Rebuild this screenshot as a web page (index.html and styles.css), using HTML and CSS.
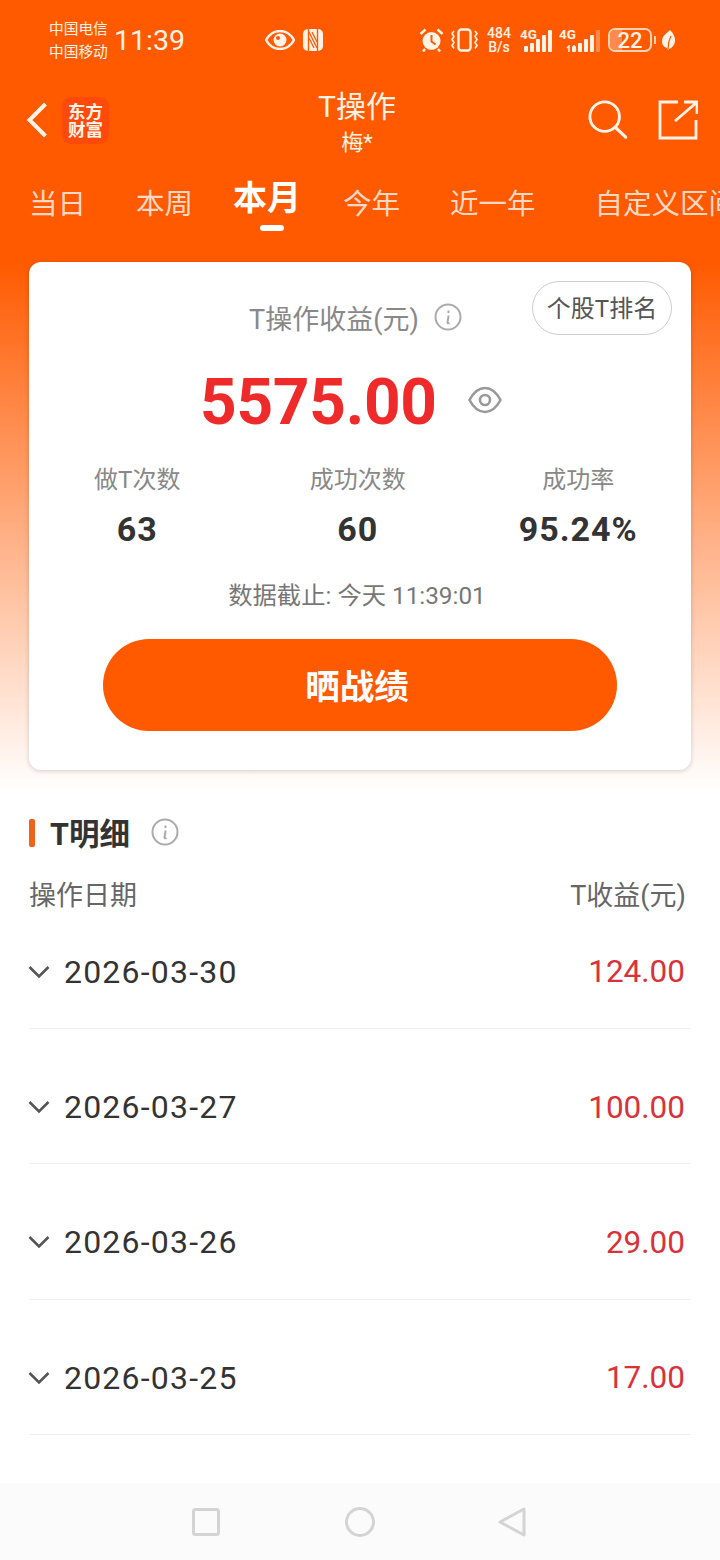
FILE: index.html
```html
<!DOCTYPE html>
<html>
  <head>
    <meta charset="utf-8" />
    <title>T操作</title>
    <link rel="stylesheet" href="styles.css">
  </head>
  <body>
    <div class="hero">
      <!-- status bar -->
      <div class="status">
        <div class="carrier">
          <span>中国电信</span>
          <span>中国移动</span>
        </div>
        <div class="time">11:39</div>
        <svg class="st-eye" width="30" height="20" viewBox="0 0 30 20">
          <path d="M1 10C5 3 10 1 15 1s10 2 14 9c-4 7-9 9-14 9S5 17 1 10z" fill="none" stroke="#fff3e8" stroke-width="2.4"/>
          <circle cx="15" cy="10" r="6.5" fill="#fff3e8"/>
          <circle cx="13" cy="8" r="2" fill="#ff5a00"/>
        </svg>
        <svg class="st-nfc" width="20" height="22" viewBox="0 0 20 22">
          <rect x="0" y="0" width="20" height="22" rx="5" fill="#fff3e8"/>
          <path d="M5.500 0v22M14.500 0v22" stroke="#ff5a00" stroke-width="1.400"/>
          <path d="M6 3l8 16M6 9l5 10M9 3l5 10" fill="none" stroke="#ff5a00" stroke-width="1.300"/>
        </svg>
        <div class="st-right">
          <svg width="25" height="24" viewBox="0 0 25 24">
            <circle cx="12.500" cy="13" r="9" fill="#fff3e8"/>
            <path d="M12.500 7v6.500l4 3" fill="none" stroke="#ff5a00" stroke-width="2"/>
            <path d="M1.500 6l5-4.500M23.500 6l-5-4.500M6 21l-2 2.500M19 21l2 2.500" stroke="#fff3e8" stroke-width="2.400" fill="none"/>
          </svg>
          <svg width="27" height="24" viewBox="0 0 27 24">
            <rect x="7.500" y="1.500" width="12" height="21" rx="3" fill="none" stroke="#fff3e8" stroke-width="2.400"/>
            <path d="M3 3l-2 2.500 2 3-2 3 2 3-2 3 2 3M24 3l2 2.500-2 3 2 3-2 3 2 3-2 3" fill="none" stroke="#fff3e8" stroke-width="1.600"/>
          </svg>
          <div class="speed"><span>484</span><span>B/s</span></div>
          <div class="signal">
            <span class="net">4G</span>
            <div class="bars">
              <i class="b1"></i><i class="b2"></i><i class="b3"></i><i class="b4"></i><i class="b5"></i>
            </div>
          </div>
          <div class="signal sig2">
            <span class="net">4G</span>
            <svg class="arrows" width="11" height="7" viewBox="0 0 11 7">
              <path d="M3 7V1L1 3M8 0v6l2-2" fill="none" stroke="#fff3e8" stroke-width="1.500"/>
            </svg>
            <div class="bars">
              <i class="b1"></i><i class="b2"></i><i class="b3"></i><i class="b4"></i><i class="b5 dim"></i>
            </div>
          </div>
          <div class="battery"><i class="fill"></i><span>22</span></div>
          <i class="bat-tip"></i>
          <svg width="13" height="20" viewBox="0 0 13 20">
            <path d="M8 0C11 3 13 6 13 10c0 5-3 8-6 9l-1 1-1-2C2 17 0 15 0 11 0 6 5 3 8 0z" fill="#fff3e8"/>
            <path d="M6 19C6 14 7 10 9 6" fill="none" stroke="#ff5a00" stroke-width="1.200"/>
          </svg>
        </div>
      </div>

      <!-- nav -->
      <div class="nav">
        <svg class="back" width="22" height="36" viewBox="0 0 22 36">
          <path d="M19.500 2L3.500 18l16 16" fill="none" stroke="#fff3e8" stroke-width="4"/>
        </svg>
        <div class="logo">东方财富</div>
        <div class="nav-title">
          <div class="title">T操作</div>
          <div class="sub">梅*</div>
        </div>
        <svg class="search" width="40" height="40" viewBox="0 0 42 42">
          <circle cx="17.500" cy="17.500" r="15.500" fill="none" stroke="#fff3e8" stroke-width="3"/>
          <path d="M29 29l10.500 10" fill="none" stroke="#fff3e8" stroke-width="3.400" stroke-linecap="round"/>
        </svg>
        <svg class="share" width="40" height="40" viewBox="0 0 40 40">
          <path d="M20 2H2v36h36V20" fill="none" stroke="#fff3e8" stroke-width="2.800"/>
          <path d="M17 21L38 3M26 2h13v12" fill="none" stroke="#fff3e8" stroke-width="2.800"/>
        </svg>
      </div>

      <!-- tabs -->
      <div class="tabs">
        <span>当日</span>
        <span>本周</span>
        <span class="active">本月</span>
        <span>今年</span>
        <span>近一年</span>
        <span class="last">自定义区间</span>
      </div>

      <div class="card">
        <div class="rank">个股T排名</div>
        <div class="card-title">
          <span>T操作收益(元)</span>
          <svg width="28" height="28" viewBox="0 0 28 28">
            <circle cx="14" cy="14" r="12.500" fill="none" stroke="#aaa" stroke-width="2"/>
            <path d="M14.500 7.500v2.500M14.500 12.500c0 3-1 5-1 7 0 1 1 1 2 .5" fill="none" stroke="#aaa" stroke-width="2"/>
          </svg>
        </div>
        <div class="amount-row">
          <span class="amount">5575.00</span>
          <svg class="amount-eye" width="34" height="34" viewBox="0 0 34 34">
            <path d="M1.500 17C6 8.500 11.500 5 17 5s11 3.500 15.500 12C28 25.500 22.500 29 17 29S6 25.500 1.500 17z" fill="none" stroke="#999" stroke-width="2.600"/>
            <circle cx="17" cy="17" r="5" fill="none" stroke="#999" stroke-width="2.600"/>
          </svg>
        </div>
        <div class="stats">
          <div class="stat"><div class="lab">做T次数</div><div class="val">63</div></div>
          <div class="stat"><div class="lab">成功次数</div><div class="val">60</div></div>
          <div class="stat"><div class="lab">成功率</div><div class="val">95.24%</div></div>
        </div>
        <div class="deadline">数据截止: 今天 11:39:01</div>
        <div class="btn">晒战绩</div>
      </div>
    </div>

    <div class="detail">
      <div class="sec-head">
        <i class="sec-bar"></i>
        <span class="sec-title">T明细</span>
        <svg width="28" height="28" viewBox="0 0 28 28">
          <circle cx="14" cy="14" r="12.500" fill="none" stroke="#aaa" stroke-width="2"/>
          <path d="M14.500 7.500v2.500M14.500 12.500c0 3-1 5-1 7 0 1 1 1 2 .5" fill="none" stroke="#aaa" stroke-width="2"/>
        </svg>
      </div>
      <div class="col-head">
        <span>操作日期</span>
        <span>T收益(元)</span>
      </div>
      <div class="row">
        <svg class="chev" width="22" height="14" viewBox="0 0 22 14"><path d="M1.500 2l9.500 9.500L20.500 2" fill="none" stroke="#555" stroke-width="2.600"/></svg>
        <span class="date">2026-03-30</span>
        <span class="money">124.00</span>
      </div>
      <div class="row">
        <svg class="chev" width="22" height="14" viewBox="0 0 22 14"><path d="M1.500 2l9.500 9.500L20.500 2" fill="none" stroke="#555" stroke-width="2.600"/></svg>
        <span class="date">2026-03-27</span>
        <span class="money">100.00</span>
      </div>
      <div class="row">
        <svg class="chev" width="22" height="14" viewBox="0 0 22 14"><path d="M1.500 2l9.500 9.500L20.500 2" fill="none" stroke="#555" stroke-width="2.600"/></svg>
        <span class="date">2026-03-26</span>
        <span class="money">29.00</span>
      </div>
      <div class="row">
        <svg class="chev" width="22" height="14" viewBox="0 0 22 14"><path d="M1.500 2l9.500 9.500L20.500 2" fill="none" stroke="#555" stroke-width="2.600"/></svg>
        <span class="date">2026-03-25</span>
        <span class="money">17.00</span>
      </div>
    </div>

    <div class="sysbar">
      <svg class="sq" width="28" height="28" viewBox="0 0 28 28"><rect x="1.500" y="1.500" width="25" height="25" rx="2" fill="none" stroke="#d4d4d4" stroke-width="3"/></svg>
      <svg width="30" height="30" viewBox="0 0 30 30"><circle cx="15" cy="15" r="13.500" fill="none" stroke="#d4d4d4" stroke-width="3"/></svg>
      <svg class="tri" width="28" height="30" viewBox="0 0 28 30"><path d="M26 2v26L2 15z" fill="none" stroke="#d4d4d4" stroke-width="3" stroke-linejoin="round"/></svg>
    </div>
  </body>
</html>
```

FILE: styles.css
```css
* {
  box-sizing: border-box;
}

html,
body {
  margin: 0;
  height: 1560px;
  overflow: hidden;
}

body {
  display: flex;
  flex-direction: column;
  background-color: #fff;
  font-family: Roboto, "Noto Sans CJK SC", sans-serif;
  width: 720px;
}

.hero {
  height: 790px;
  padding-top: 18px;
  background: linear-gradient(180deg, #ff5a00 0, #ff5a00 262px, #ffffff 790px);
}

/* status bar */
.status {
  display: flex;
  align-items: center;
  height: 44px;
  padding-left: 49px;
  color: #fff3e8;
}

.carrier {
  display: flex;
  flex-direction: column;
  padding-top: 2px;
  font-size: 14.700px;
  line-height: 23px;
  width: 65px;
}

.time {
  font-size: 28.500px;
  width: 151px;
}

.st-eye {
  margin-right: 8px;
}

.st-right {
  display: flex;
  align-items: center;
  margin-left: 96px;
}

.st-right svg:nth-child(2) {
  margin-left: 7px;
}

.speed {
  display: flex;
  flex-direction: column;
  align-items: center;
  width: 26px;
  margin-left: 8px;
  font-size: 14px;
  font-weight: 500;
  line-height: 14px;
}

.signal {
  position: relative;
  width: 32px;
  height: 24px;
  margin-left: 8px;
}

.sig2 {
  width: 41px;
  margin-left: 7px;
}

.net {
  position: absolute;
  left: 0;
  top: -1px;
  font-size: 13.500px;
  font-weight: 700;
  line-height: 14px;
}

.arrows {
  position: absolute;
  left: 0;
  bottom: 0;
}

.bars {
  position: absolute;
  right: 0;
  bottom: 0;
  display: flex;
  align-items: flex-end;
  gap: 2px;
}

.bars i {
  display: block;
  width: 4px;
  background-color: #fff3e8;
  border-radius: 1px;
}

.bars .b1 { height: 6px; }
.bars .b2 { height: 9px; }
.bars .b3 { height: 13px; }
.bars .b4 { height: 17px; }
.bars .b5 { height: 22px; }
.bars .dim { background-color: #ff8a4d; }

.battery {
  position: relative;
  display: flex;
  align-items: center;
  justify-content: center;
  width: 44px;
  height: 24px;
  margin-left: 8px;
  border: 2px solid #fdd3b4;
  border-radius: 7px;
  font-size: 22px;
  font-weight: 500;
}

.battery .fill {
  position: absolute;
  left: 0;
  top: 0;
  bottom: 0;
  width: 12px;
  border-radius: 5px 0 0 5px;
  background-color: #ff8a4d;
}

.battery span {
  position: relative;
}

.bat-tip {
  width: 2px;
  height: 8px;
  margin: 0 6px 0 2px;
  background-color: #fdd3b4;
}

/* nav */
.nav {
  position: relative;
  display: flex;
  align-items: center;
  height: 86px;
  margin-top: 15px;
  padding-left: 26px;
  color: #fff3e8;
}

.back {
  margin-right: 14px;
}

.logo {
  width: 47px;
  height: 47px;
  padding: 5px 6px;
  border-radius: 9px;
  background-color: #ff4a0a;
  font-family: "Noto Sans CJK SC", sans-serif;
  font-size: 17.500px;
  font-weight: 700;
  line-height: 18.500px;
  text-align: center;
}

.nav-title {
  position: absolute;
  left: 0;
  top: 9px;
  width: 714px;
  text-align: center;
}

.title {
  font-size: 30px;
  line-height: 42px;
}

.sub {
  font-size: 22px;
  line-height: 30px;
}

.search {
  margin-left: auto;
}

.share {
  margin: 0 22px 0 30px;
}

/* tabs */
.tabs {
  display: flex;
  align-items: center;
  height: 78px;
  margin-top: -1px;
  padding-left: 29px;
  gap: 50px;
  font-size: 28.500px;
  color: #fdd9c4;
  white-space: nowrap;
  overflow: hidden;
}

.tabs .active {
  position: relative;
  margin: -12px -8px 0 -10px;
  font-size: 34px;
  font-weight: 700;
  color: #fff;
}

.tabs .active::after {
  content: "";
  position: absolute;
  left: 27px;
  bottom: -11px;
  width: 24px;
  height: 6px;
  border-radius: 3px;
  background-color: #fff;
}

.tabs .last {
  margin-left: 9px;
}

/* card */
.card {
  position: relative;
  height: 508px;
  margin: 22px 29px 0;
  padding-top: 35px;
  border-radius: 12px;
  background-color: #fff;
  box-shadow: 0 1px 5px rgba(0, 0, 0, 0.18);
}

.rank {
  position: absolute;
  top: 19px;
  right: 19px;
  width: 140px;
  height: 54px;
  border: 1px solid #ccc;
  border-radius: 27px;
  text-align: center;
  font-size: 24px;
  line-height: 55px;
  color: #555;
}

.card-title {
  display: flex;
  align-items: center;
  justify-content: center;
  gap: 15px;
  height: 40px;
  padding-right: 9px;
  font-size: 27px;
  color: #888;
}

.amount-row {
  display: flex;
  align-items: center;
  height: 86px;
  margin-top: 22px;
  padding-left: 171px;
  gap: 31px;
}

.amount {
  font-size: 64px;
  font-weight: 700;
  letter-spacing: -0.300px;
  color: #ee2a2a;
}

.amount-eye {
  margin-top: -4px;
}

.stats {
  display: flex;
  margin: 18px 0 0 -2px;
}

.stat {
  flex: none;
  width: 220.500px;
  text-align: center;
}

.lab {
  font-size: 24px;
  line-height: 34px;
  color: #888;
}

.val {
  margin-top: 12px;
  font-size: 34px;
  font-weight: 700;
  letter-spacing: 1px;
  line-height: 40px;
  color: #333;
}

.deadline {
  margin-top: 29px;
  padding-right: 6px;
  text-align: center;
  font-size: 24.300px;
  line-height: 36px;
  color: #777;
}

.btn {
  height: 92px;
  margin: 25px 74px 0;
  padding-right: 6px;
  border-radius: 46px;
  background-color: #ff5a00;
  color: #fff;
  text-align: center;
  font-size: 34.500px;
  font-weight: 700;
  line-height: 96px;
}

/* detail list */
.detail {
  flex: 1;
  padding: 26px 29px 0;
}

.sec-head {
  display: flex;
  align-items: center;
  height: 32px;
}

.sec-bar {
  width: 6px;
  height: 28px;
  margin-top: 2px;
  border-radius: 2px;
  background-color: #f0611a;
}

.sec-title {
  margin: 0 21px 0 15px;
  font-size: 30.500px;
  font-weight: 700;
  color: #333;
}

.col-head {
  display: flex;
  justify-content: space-between;
  margin-top: 29px;
  padding-right: 5px;
  font-size: 27px;
  line-height: 38px;
  color: #666;
}

.row {
  display: flex;
  align-items: center;
  height: 135.300px;
  padding: 22px 6px 0 0;
  border-bottom: 1px solid #efefef;
}

.col-head + .row {
  height: 114px;
  padding-top: 0;
}

.chev {
  margin: 0 14px 0 -1px;
}

.date {
  font-size: 32px;
  letter-spacing: 1.200px;
  color: #333;
}

.money {
  margin-left: auto;
  font-size: 31.500px;
  color: #d8323a;
}

/* android nav */
.sysbar {
  display: flex;
  align-items: center;
  justify-content: center;
  gap: 125px;
  height: 77px;
  padding-right: 2px;
  background-color: #fbfbfb;
}

.tri {
  margin-left: -2px;
}
```
